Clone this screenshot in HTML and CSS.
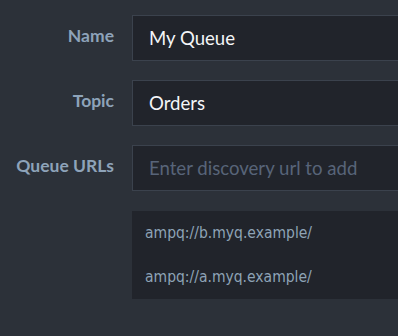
FILE: index.html
```html
<!DOCTYPE html>
<html>
<head>
<meta charset="utf-8">
<link rel="stylesheet" href="styles.css">
</head>
<body>
<form class="form">
  <div class="row">
    <label class="label">Name</label>
    <div class="field"><input class="input" type="text" value="My Queue"></div>
  </div>
  <div class="row">
    <label class="label">Topic</label>
    <div class="field"><input class="input" type="text" value="Orders"></div>
  </div>
  <div class="row">
    <label class="label">Queue URLs</label>
    <div class="field"><input class="input" type="text" placeholder="Enter discovery url to add"></div>
  </div>
  <div class="row row-list">
    <div class="label"></div>
    <ul class="url-list">
      <li class="url-item">ampq://b.myq.example/</li>
      <li class="url-item">ampq://a.myq.example/</li>
    </ul>
  </div>
</form>
</body>
</html>
```
FILE: styles.css
```css
html, body {
  margin: 0;
  padding: 0;
  background: #2c3139;
  overflow: hidden;
  width: 398px;
  height: 336px;
}
.form {
  display: flex;
  flex-direction: column;
  gap: 19px;
  padding-top: 15px;
  width: 560px;
}
.row {
  display: grid;
  grid-template-columns: 114px 1fr;
  column-gap: 18px;
}
.row-list {
  margin-top: 1px;
}
.label {
  font-family: Lato, "Open Sans", sans-serif;
  font-weight: 700;
  font-size: 17.5px;
  line-height: 42px;
  color: #8ea3b9;
  text-align: right;
}
.input {
  box-sizing: border-box;
  width: 100%;
  height: 46px;
  margin: 0;
  padding: 0 16px;
  background: #21242b;
  border: 1px solid #3b424d;
  border-radius: 0;
  outline: none;
  font-family: Lato, "Open Sans", sans-serif;
  font-size: 18.6px;
  line-height: 44px;
  color: #f4f6f8;
}
.input::placeholder {
  color: #586479;
  opacity: 1;
}
.url-list {
  list-style: none;
  margin: 0;
  padding: 0;
  background: #21242b;
}
.url-item {
  height: 44px;
  line-height: 44px;
  padding-left: 13px;
  font-family: "DejaVu Sans Condensed", "DejaVu Sans", sans-serif;
  font-stretch: condensed;
  font-size: 15.5px;
  color: #8ea3b6;
}
```
